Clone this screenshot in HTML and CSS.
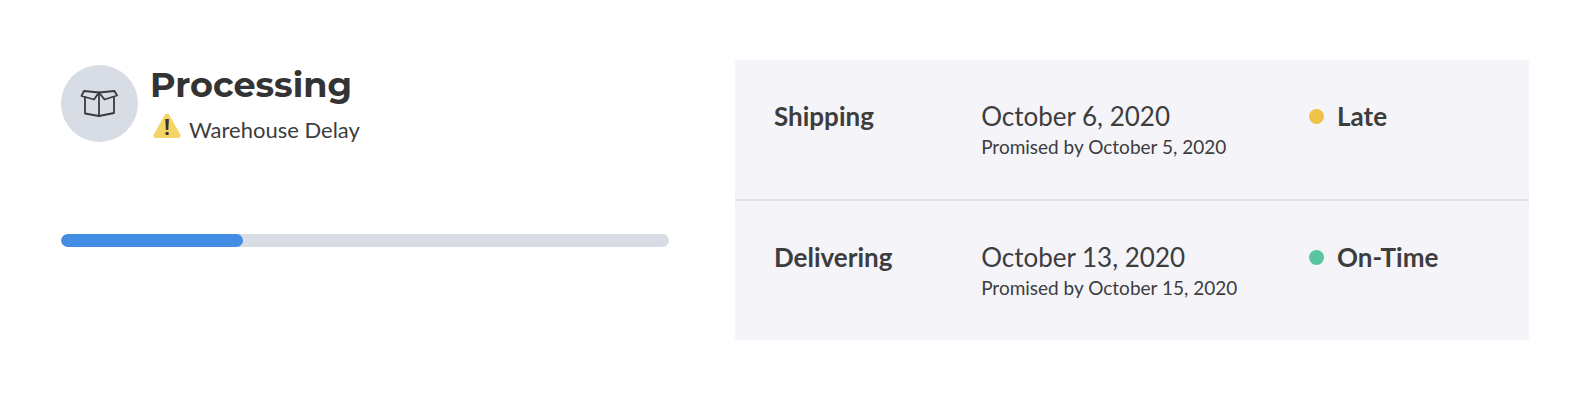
FILE: index.html
```html
<!DOCTYPE html>
<html lang="en">
<head>
    <meta charset="UTF-8">
    <meta name="viewport" content="width=device-width, initial-scale=1.0">
    <title>Order status</title>
    <link rel="stylesheet" href="styles.css">
</head>
<body>
    <main class="order">
        <section class="status">
            <div class="status-header">
                <div class="status-icon">
                    <svg viewBox="0 0 40 32" width="40" height="32" fill="none" stroke="#3a3a3a" stroke-width="1.8" stroke-linejoin="round" stroke-linecap="round" aria-hidden="true">
                        <path d="M19 4.5 4 3 1.5 8 14 11.5 19 4.5Z"/>
                        <path d="M19 4.5 34.5 3 37 7.5 24.5 11.5 19 4.5Z"/>
                        <path d="M19 4.5V28"/>
                        <path d="M5 9.5V25.5L19 28 34 25V9"/>
                    </svg>
                </div>
                <div>
                    <h1>Processing</h1>
                    <p class="reason">
                        <svg viewBox="0 0 28 26" width="28" height="26" aria-hidden="true">
                            <path d="M14 3 3 22.5H25Z" fill="#f3d566" stroke="#f3d566" stroke-width="5" stroke-linejoin="round"/>
                            <path d="M12.3 6H15.9L15.3 17H12.9Z" fill="#333"/>
                            <path d="M12.6 19H15.6V22H12.6Z" fill="#333"/>
                        </svg>
                        Warehouse Delay
                    </p>
                </div>
            </div>
            <div class="progress" role="progressbar" aria-label="Order progress" aria-valuemin="0" aria-valuemax="100" aria-valuenow="30">
                <div class="progress-fill" style="width: 30%"></div>
            </div>
        </section>

        <table class="dates">
            <tbody>
                <tr>
                    <th scope="row">Shipping</th>
                    <td class="date">October 6, 2020 <small>Promised by October 5, 2020</small></td>
                    <td><span class="state late">Late</span></td>
                </tr>
                <tr>
                    <th scope="row">Delivering</th>
                    <td class="date">October 13, 2020 <small>Promised by October 15, 2020</small></td>
                    <td><span class="state on-time">On-Time</span></td>
                </tr>
            </tbody>
        </table>
    </main>
</body>
</html>
```

FILE: styles.css
```css
* {
    box-sizing: border-box;
}

body {
    margin: 0;
    background-color: #fff;
    color: #3d3d3d;
    font-family: Lato, sans-serif;
    font-size: 26px;
    line-height: 32px;
}

.order {
    display: grid;
    grid-template-columns: 608fr 794fr;
    gap: 66px;
    align-items: start;
    padding: 60px 59px 60px 61px;
}

.status-header {
    display: flex;
    gap: 12px;
    padding-top: 5px;
}

.status-icon {
    display: flex;
    align-items: center;
    justify-content: center;
    flex-shrink: 0;
    width: 77px;
    height: 77px;
    border-radius: 50%;
    background-color: #d8dce5;
}

h1 {
    margin: 0;
    color: #333;
    font-family: Montserrat, Inter, sans-serif;
    font-size: 35px;
    font-weight: 700;
    line-height: 40px;
}

.reason {
    display: flex;
    align-items: flex-start;
    gap: 8px;
    margin: 8px 0 0;
    padding-left: 3px;
    font-size: 22px;
    line-height: 34px;
}

.progress {
    margin-top: 87px;
    height: 13px;
    border-radius: 7px;
    background-color: #d8dce5;
    overflow: hidden;
}

.progress-fill {
    height: 100%;
    border-radius: 7px;
    background-color: #448de5;
}

.dates {
    width: 100%;
    table-layout: fixed;
    border-collapse: collapse;
    background-color: #f4f4f9;
}

.dates th,
.dates td {
    height: 140px;
    padding: 40px 0 36px;
    text-align: left;
    vertical-align: top;
}

.dates th {
    width: 31%;
    padding-left: 39px;
    font-weight: 700;
}

.dates .date {
    width: 41.3%;
}

.dates tr + tr {
    border-top: 2px solid #dfe3eb;
}

.date small {
    display: block;
    font-size: 19px;
    line-height: 30px;
}

.state {
    display: flex;
    align-items: center;
    gap: 13px;
    font-weight: 700;
}

.state::before {
    content: "";
    width: 15px;
    height: 15px;
    border-radius: 50%;
}

.late::before {
    background-color: #efc247;
}

.on-time::before {
    background-color: #59c49d;
}
```
